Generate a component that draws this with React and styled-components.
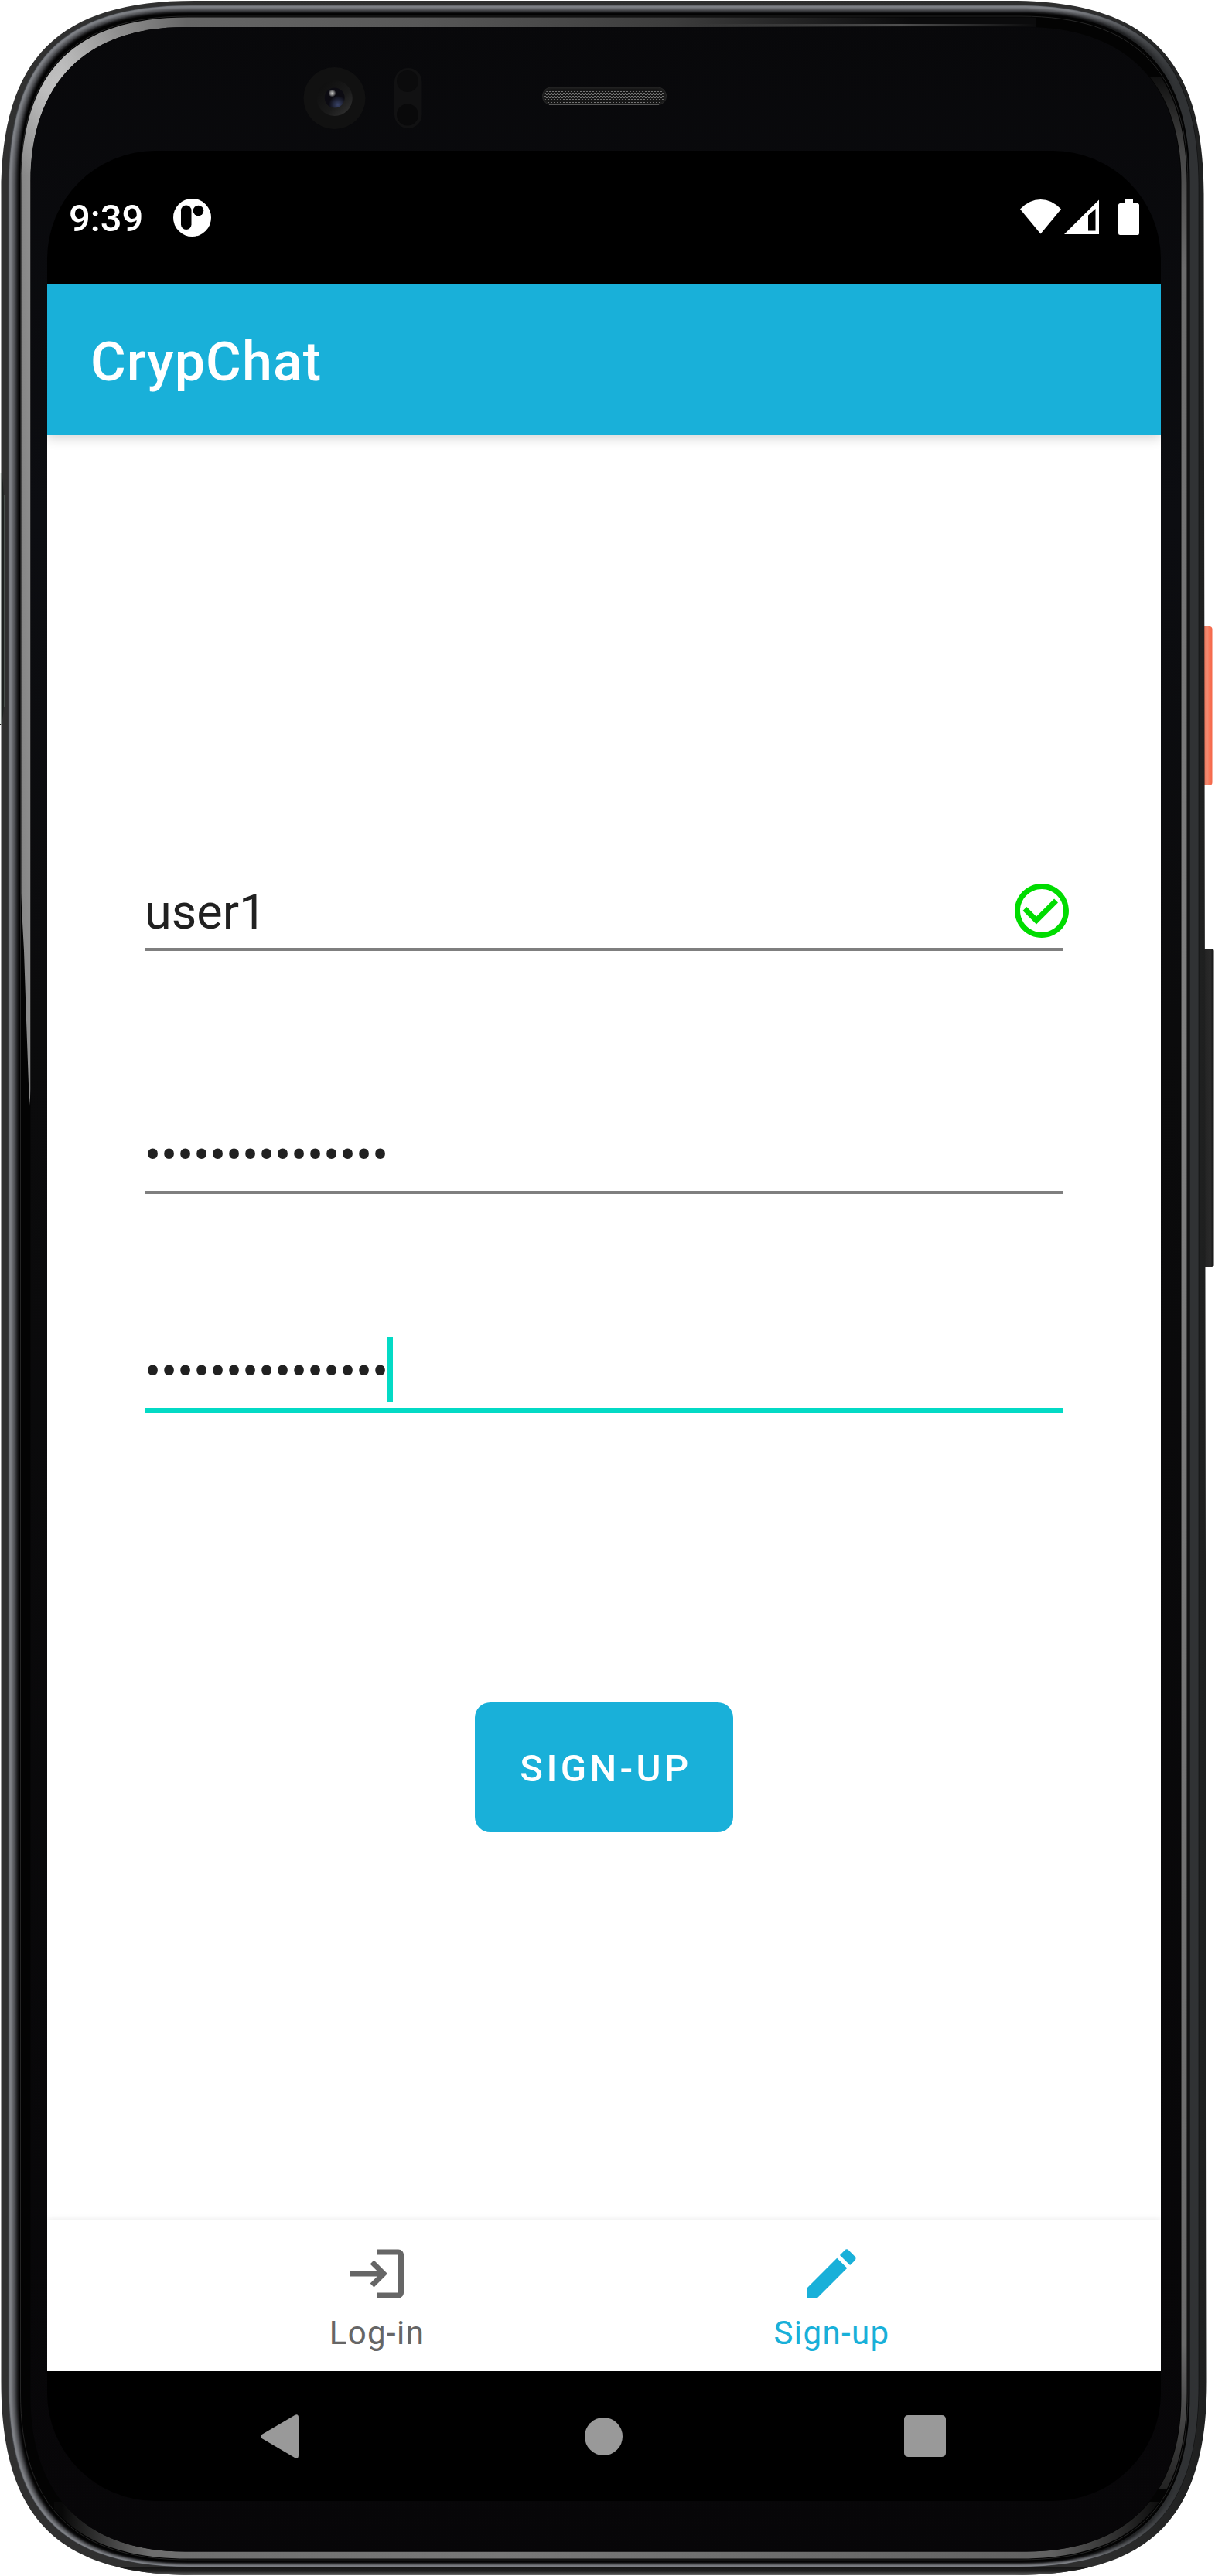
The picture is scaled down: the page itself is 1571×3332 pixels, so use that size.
import React from "react";
import styled, { createGlobalStyle } from "styled-components";

const ACCENT = "#19b0d9";
const TEAL = "#03dac5";

const GlobalStyle = createGlobalStyle`
  * { box-sizing: border-box; }
  body {
    margin: 0;
    background: #fff;
    font-family: Roboto, "Noto Sans", sans-serif;
  }
`;

/* ---------- device shell ---------- */

const Device = styled.div`
  position: relative;
  width: 1571px;
  height: 3332px;
  padding: 195px 70px 97px 61px;
  overflow: hidden;
`;

const Shell = styled.svg`
  position: absolute;
  inset: 0;
  z-index: 0;
  display: block;
`;

const Screen = styled.main`
  position: relative;
  z-index: 1;
  display: flex;
  flex-direction: column;
  width: 1440px;
  height: 3040px;
  border-radius: 140px;
  overflow: hidden;
  background: #000;
`;

/* ---------- status bar ---------- */

const StatusBar = styled.header`
  display: flex;
  align-items: center;
  justify-content: space-between;
  flex: none;
  height: 172px;
  padding: 0 28px 0 28px;
  color: #fff;
`;

const StatusGroup = styled.div`
  display: flex;
  align-items: center;
  gap: ${(p) => p.$gap}px;
`;

const Clock = styled.span`
  font-size: 49px;
  font-weight: 500;
  line-height: 58px;
  padding-top: 4px;
`;

const Glyph = styled.svg`
  display: block;
  flex: none;
`;

/* ---------- app bar ---------- */

const AppBar = styled.div`
  position: relative;
  z-index: 1;
  display: flex;
  align-items: center;
  flex: none;
  height: 196px;
  padding: 5px 56px 0;
  background: ${ACCENT};
  box-shadow: 0 4px 14px rgba(0, 0, 0, 0.17);
`;

const Title = styled.h1`
  margin: 0;
  color: #fff;
  font-size: 70px;
  font-weight: 500;
  line-height: 82px;
  letter-spacing: 1.1px;
`;

/* ---------- form ---------- */

const Form = styled.section`
  display: flex;
  flex-direction: column;
  flex: 1;
  min-height: 0;
  padding: 567px 126px 0;
  background: #fff;
`;

const Field = styled.div`
  display: flex;
  align-items: flex-start;
  flex: none;
  height: ${(p) => (p.$active ? 103 : 100)}px;
  margin-bottom: ${(p) => p.$gap}px;
  border-bottom: ${(p) => (p.$active ? `7px solid ${TEAL}` : "4px solid #7f7f7f")};
`;

const Value = styled.span`
  padding-top: 13px;
  color: #212121;
  font-size: 63px;
  line-height: 74px;
  white-space: nowrap;
  letter-spacing: ${(p) => (p.$masked ? "-0.25px" : "0")};
`;

const Caret = styled.span`
  width: 7px;
  height: 85px;
  margin: 4px 0 0 -1px;
  background: ${TEAL};
`;

const Valid = styled(Glyph)`
  margin: 6px -14px 0 auto;
`;

const SubmitButton = styled.button`
  align-self: center;
  flex: none;
  width: 334px;
  height: 168px;
  padding: 4px 0 0 5px;
  border: 0;
  border-radius: 20px;
  background: ${ACCENT};
  color: #fff;
  font-family: inherit;
  font-size: 49px;
  font-weight: 500;
  line-height: 58px;
  letter-spacing: 4.375px;
`;

/* ---------- bottom tabs ---------- */

const Tabs = styled.nav`
  position: relative;
  display: flex;
  justify-content: center;
  flex: none;
  height: 196px;
  background: #fff;
  box-shadow: 0 -1px 7px rgba(0, 0, 0, 0.07);
`;

const Tab = styled.a`
  display: flex;
  flex-direction: column;
  align-items: center;
  width: 588px;
  padding-top: 28px;
  color: ${(p) => (p.$active ? ACCENT : "#666")};
  font-size: 42px;
  line-height: 50px;
  letter-spacing: 1.4px;
`;

const TabLabel = styled.span`
  margin-top: 10px;
  padding-left: 1px;
`;

/* ---------- system navigation ---------- */

const SystemNav = styled.footer`
  display: grid;
  grid-template-columns: 1fr 49px 1fr;
  align-items: center;
  flex: none;
  height: 168px;
  padding: 0 278px 0 276px;
`;

const NavSlot = styled.div`
  display: flex;
  justify-content: ${(p) => p.$align};
`;

/* Closed outline with soft corners: `reach` is how far each corner extends,
   `m` the distance from the box corner to the curve along each axis, and
   `rb` the right edge at the foot, for a side that widens on its way down. */
function outline(l, t, r, b, reach, m, rb = r) {
  const c = (8 * m - reach) / 3;
  return [
    `M${l} ${t + reach}`,
    `C${l} ${t + c} ${l + c} ${t} ${l + reach} ${t}`,
    `H${r - reach}`,
    `C${r - c} ${t} ${r} ${t + c} ${r} ${t + reach}`,
    `L${rb} ${b - reach}`,
    `C${rb} ${b - c} ${rb - c} ${b} ${rb - reach} ${b}`,
    `H${l + reach}`,
    `C${l + c} ${b} ${l} ${b - c} ${l} ${b - reach}`,
    "Z",
  ].join("");
}

const RAIL = [
  [60, 62, 66],
  [118, 121, 126],
  [128, 130, 135],
  [122, 124, 129],
  [112, 114, 119],
  [101, 103, 107],
  [90, 91, 95],
  [78, 79, 83],
  [64, 65, 68],
  [48, 49, 52],
  [33, 33, 35],
  [20, 20, 21],
  [9, 9, 10],
];

const BODY = outline(1.5, 1, 1556.5, 3331, 250, 59, 1560.5);

const RING =
  outline(27.5, 22.5, 1534.5, 3309.5, 215, 53) +
  outline(39.5, 35, 1527.5, 3300.5, 200, 52);

function DeviceShell() {
  return (
    <Shell width="1571" height="3332" viewBox="0 0 1571 3332" aria-hidden="true">
      <defs>
        <linearGradient id="body" gradientUnits="userSpaceOnUse" x1="0" y1="0" x2="1571" y2="0">
          <stop offset="0" stopColor="#303030" />
          <stop offset=".9" stopColor="#2e2e2e" />
          <stop offset="1" stopColor="#1d1e1e" />
        </linearGradient>
        {RAIL.map(([r, g, b], i) => (
          <linearGradient key={i} id={`rail${i}`} gradientUnits="userSpaceOnUse" x1="0" y1="0" x2="1571" y2="0">
            <stop offset="0" stopColor={`rgb(${r},${g},${b})`} />
            <stop offset=".88" stopColor={`rgb(${r},${g},${b})`} />
            <stop offset=".97" stopColor={i === 0 ? "#111213" : "#303234"} />
          </linearGradient>
        ))}
        <linearGradient id="foot" gradientUnits="userSpaceOnUse" x1="0" y1="3321" x2="0" y2="3331">
          <stop offset="0" stopColor="#151515" />
          <stop offset=".5" stopColor="#222" />
          <stop offset="1" stopColor="#6a6a6a" />
        </linearGradient>
        <linearGradient id="glareTop" gradientUnits="userSpaceOnUse" x1="0" y1="0" x2="1340" y2="0">
          <stop offset=".02" stopColor="#868686" />
          <stop offset=".06" stopColor="#a2a2a2" />
          <stop offset=".12" stopColor="#8c8c8c" />
          <stop offset=".18" stopColor="#666" />
          <stop offset=".4" stopColor="#585858" />
          <stop offset=".65" stopColor="#3c3c3c" />
          <stop offset=".88" stopColor="#0b0b0c" />
        </linearGradient>
        <radialGradient id="glareSpot" gradientUnits="userSpaceOnUse" cx="55" cy="110" r="120">
          <stop offset="0" stopColor="#fff" stopOpacity=".4" />
          <stop offset="1" stopColor="#fff" stopOpacity="0" />
        </radialGradient>
        <linearGradient id="glareRight" gradientUnits="userSpaceOnUse" x1="0" y1="100" x2="0" y2="3220">
          <stop offset="0" stopColor="#101010" />
          <stop offset=".03" stopColor="#444" />
          <stop offset=".08" stopColor="#6c6c6c" />
          <stop offset=".4" stopColor="#808080" />
          <stop offset=".94" stopColor="#6a6a6a" />
          <stop offset="1" stopColor="#222" />
        </linearGradient>
        <linearGradient id="glareBottom" gradientUnits="userSpaceOnUse" x1="80" y1="0" x2="1500" y2="0">
          <stop offset="0" stopColor="#080808" />
          <stop offset=".08" stopColor="#6e6e6e" />
          <stop offset=".4" stopColor="#787878" />
          <stop offset=".9" stopColor="#626262" />
          <stop offset="1" stopColor="#0c0c0c" />
        </linearGradient>
        <linearGradient id="hairline" gradientUnits="userSpaceOnUse" x1="900" y1="0" x2="1340" y2="0">
          <stop offset="0" stopColor="#666" stopOpacity="0" />
          <stop offset=".6" stopColor="#666" />
          <stop offset="1" stopColor="#666" stopOpacity="0" />
        </linearGradient>
        <linearGradient id="panel" gradientUnits="userSpaceOnUse" x1="0" y1="0" x2="0" y2="3332">
          <stop offset="0" stopColor="#08080a" />
          <stop offset=".2" stopColor="#0c0d11" />
          <stop offset=".4" stopColor="#0b0b0c" />
          <stop offset="1" stopColor="#070608" />
        </linearGradient>
        <linearGradient id="power" x1="0" y1="0" x2="1" y2="0">
          <stop offset="0" stopColor="#d9583c" />
          <stop offset=".3" stopColor="#e86f54" />
          <stop offset=".65" stopColor="#f28a70" />
          <stop offset=".8" stopColor="#fb7355" />
          <stop offset="1" stopColor="#f2674a" />
        </linearGradient>
        <linearGradient id="volume" x1="0" y1="0" x2="1" y2="0">
          <stop offset="0" stopColor="#111" />
          <stop offset=".3" stopColor="#242424" />
          <stop offset=".75" stopColor="#2a2a2a" />
          <stop offset="1" stopColor="#0c0c0c" />
        </linearGradient>
        <linearGradient id="lensRim" x1="0" y1="0" x2="1" y2="1">
          <stop offset="0" stopColor="#0c0c0c" />
          <stop offset=".6" stopColor="#1a1a1a" />
          <stop offset="1" stopColor="#363636" />
        </linearGradient>
        <radialGradient id="lensBlue" cx=".66" cy=".85" r=".45">
          <stop offset="0" stopColor="#3a4468" />
          <stop offset="1" stopColor="#0c0b12" />
        </radialGradient>
        <radialGradient id="lensLight">
          <stop offset="0" stopColor="#bdbdbd" />
          <stop offset=".5" stopColor="#7d7d7d" />
          <stop offset="1" stopColor="#7d7d7d" stopOpacity="0" />
        </radialGradient>
        <pattern id="mesh" width="4" height="4" patternUnits="userSpaceOnUse">
          <rect width="4" height="4" fill="#161616" />
          <path d="M0 .5h2M2 2.500h2" stroke="#747474" strokeWidth="1" />
        </pattern>
        <clipPath id="clipTop">
          <path d="M0 0H1340V60L300 300L60 1200L38 1430L34 1320L31 1230L27 1155H0Z" />
        </clipPath>
        <clipPath id="clipRight">
          <rect x="1480" y="100" width="91" height="3120" />
        </clipPath>
        <clipPath id="clipBottom">
          <rect x="70" y="3236" width="1430" height="96" />
        </clipPath>
        <clipPath id="clipFoot">
          <rect x="0" y="3320" width="1571" height="12" />
        </clipPath>
      </defs>

      <rect x="1550" y="810" width="17.5" height="206" rx="4" fill="url(#power)" />
      <rect x="1554" y="1227" width="15.5" height="412" rx="3" fill="url(#volume)" />

      <path d={BODY} fill="url(#body)" />
      <path d={BODY} fill="url(#foot)" clipPath="url(#clipFoot)" />
      {RAIL.map((_, i) => (
        <path
          key={i}
          d={outline(10.5 + i * 1.1, 6.5 + i * 0.85, 1550.5 - i * 0.85, 3320.5 - i * 0.5, 236 - i * 1.4, 56 - i * 0.25)}
          fill={`url(#rail${i})`}
        />
      ))}
      <path d={outline(24.5, 17.5, 1538.5, 3313.5, 218, 53)} fill="#030303" />
      <path d={outline(26.5, 21, 1536, 3311, 216, 53)} fill="none" stroke="#242424" strokeWidth="1" />

      <path d={RING} fillRule="evenodd" fill="url(#glareTop)" clipPath="url(#clipTop)" />
      <path d={RING} fillRule="evenodd" fill="url(#glareSpot)" />
      <path d={RING} fillRule="evenodd" fill="url(#glareRight)" clipPath="url(#clipRight)" />
      <path d={RING} fillRule="evenodd" fill="url(#glareBottom)" clipPath="url(#clipBottom)" />
      <path d={outline(39.5, 35, 1526.5, 3300.5, 200, 52)} fill="url(#panel)" />
      <path d="M900 32H1340" stroke="url(#hairline)" strokeWidth="1.500" />

      {/* side seam */}
      <path d="M0 612H2Q5 625 5 660V900Q5 930 1 938H0Z" fill="#1c201e" />
      <path d="M0 612H1.500V936H0Z" fill="#e9eeeb" />
      <path d="M5.500 640V915" stroke="#4a524e" strokeWidth="1" />

      {/* front camera */}
      <circle cx="432.500" cy="127" r="40" fill="#111" />
      <circle cx="432.700" cy="127" r="23" fill="url(#lensRim)" />
      <circle cx="432.700" cy="126.500" r="13" fill="url(#lensBlue)" />
      <circle cx="429.500" cy="120.500" r="5" fill="url(#lensLight)" />

      {/* proximity sensors */}
      <rect x="510" y="88" width="35.500" height="78" rx="17.700" fill="#111112" />
      <circle cx="527" cy="105" r="14" fill="#0b0b0c" />
      <circle cx="527" cy="148.500" r="14" fill="#09090a" />

      {/* earpiece */}
      <rect x="701.500" y="113" width="160" height="22.500" rx="11" fill="#1c1c1c" stroke="#262626" />
      <rect x="704" y="115" width="155" height="19" rx="9.500" fill="url(#mesh)" />
      <path d="M710 135.300H852" stroke="#555" strokeWidth="1.300" />
    </Shell>
  );
}

function AppBadge() {
  return (
    <Glyph width="49" height="49" viewBox="0 0 49 49">
      <circle cx="24.500" cy="24.500" r="24.500" fill="#fff" />
      <rect x="10" y="8.500" width="13.500" height="31.500" rx="6.700" fill="#000" />
      <circle cx="32.500" cy="15.500" r="6.800" fill="#000" />
    </Glyph>
  );
}

function StatusIcons() {
  return (
    <Glyph width="154" height="47" viewBox="1319 258 154 47" fill="#fff">
      <path d="M1319 270.500Q1331 258 1345.500 258Q1360 258 1372 270.500L1345.500 302.500Z" />
      <path fillRule="evenodd" d="M1376 303L1421 258.500V303ZM1407 278.500V298.500H1416.500V270Z" />
      <path d="M1454 258H1465V263H1470.500Q1473 263 1473 265.500V301.500Q1473 304 1470.500 304H1448.500Q1446 304 1446 301.500V265.500Q1446 263 1448.500 263H1454Z" />
    </Glyph>
  );
}

const MASKED = "•".repeat(15);

export default function App() {
  return (
    <>
      <GlobalStyle />
      <Device>
        <DeviceShell />
        <Screen>
          <StatusBar>
            <StatusGroup $gap={39}>
              <Clock>9:39</Clock>
              <AppBadge />
            </StatusGroup>
            <StatusIcons />
          </StatusBar>

          <AppBar>
            <Title>CrypChat</Title>
          </AppBar>

          <Form>
            <Field $gap={215}>
              <Value>user1</Value>
              <Valid width="84" height="84" viewBox="0 0 24 24" fill="#00dc00">
                <path d="M12 2C6.480 2 2 6.480 2 12s4.480 10 10 10 10-4.480 10-10S17.520 2 12 2zm0 18c-4.410 0-8-3.590-8-8s3.590-8 8-8 8 3.590 8 8-3.590 8-8 8zm4.590-12.420L10 14.170l-3.590-3.580L5 12l5 5 8-8z" />
              </Valid>
            </Field>
            <Field $gap={180}>
              <Value $masked>{MASKED}</Value>
            </Field>
            <Field $active $gap={374}>
              <Value $masked>{MASKED}</Value>
              <Caret />
            </Field>
            <SubmitButton type="button">SIGN-UP</SubmitButton>
          </Form>

          <Tabs>
            <Tab>
              <Glyph width="84" height="84" viewBox="0 0 24 24" fill="currentColor">
                <path d="M11 7L9.600 8.400l2.600 2.600H2v2h10.200l-2.600 2.600L11 17l5-5-5-5zm9 12h-8v2h8c1.100 0 2-.9 2-2V5c0-1.100-.9-2-2-2h-8v2h8v14z" />
              </Glyph>
              <TabLabel>Log-in</TabLabel>
            </Tab>
            <Tab $active>
              <Glyph width="84" height="84" viewBox="0 0 24 24" fill="currentColor">
                <path d="M3 17.250V21h3.750L17.810 9.940l-3.750-3.750L3 17.250zM20.710 7.040c.39-.39.39-1.020 0-1.410l-2.340-2.340a.996.996 0 0 0-1.410 0l-1.830 1.830 3.750 3.750 1.830-1.830z" />
              </Glyph>
              <TabLabel>Sign-up</TabLabel>
            </Tab>
          </Tabs>

          <SystemNav>
            <NavSlot $align="flex-start">
              <Glyph width="49" height="57" viewBox="0 0 49 57" fill="#999">
                <path d="M1.500 26L44.500 .8Q49 -1 49 4V53Q49 58 44.500 56.200L1.500 31Q-1.500 28.500 1.500 26Z" />
              </Glyph>
            </NavSlot>
            <NavSlot $align="center">
              <Glyph width="49" height="49" viewBox="0 0 49 49" fill="#999">
                <circle cx="24.500" cy="24.500" r="24.500" />
              </Glyph>
            </NavSlot>
            <NavSlot $align="flex-end">
              <Glyph width="54" height="54" viewBox="0 0 54 54" fill="#999">
                <rect width="54" height="54" rx="5" />
              </Glyph>
            </NavSlot>
          </SystemNav>
        </Screen>
      </Device>
    </>
  );
}
